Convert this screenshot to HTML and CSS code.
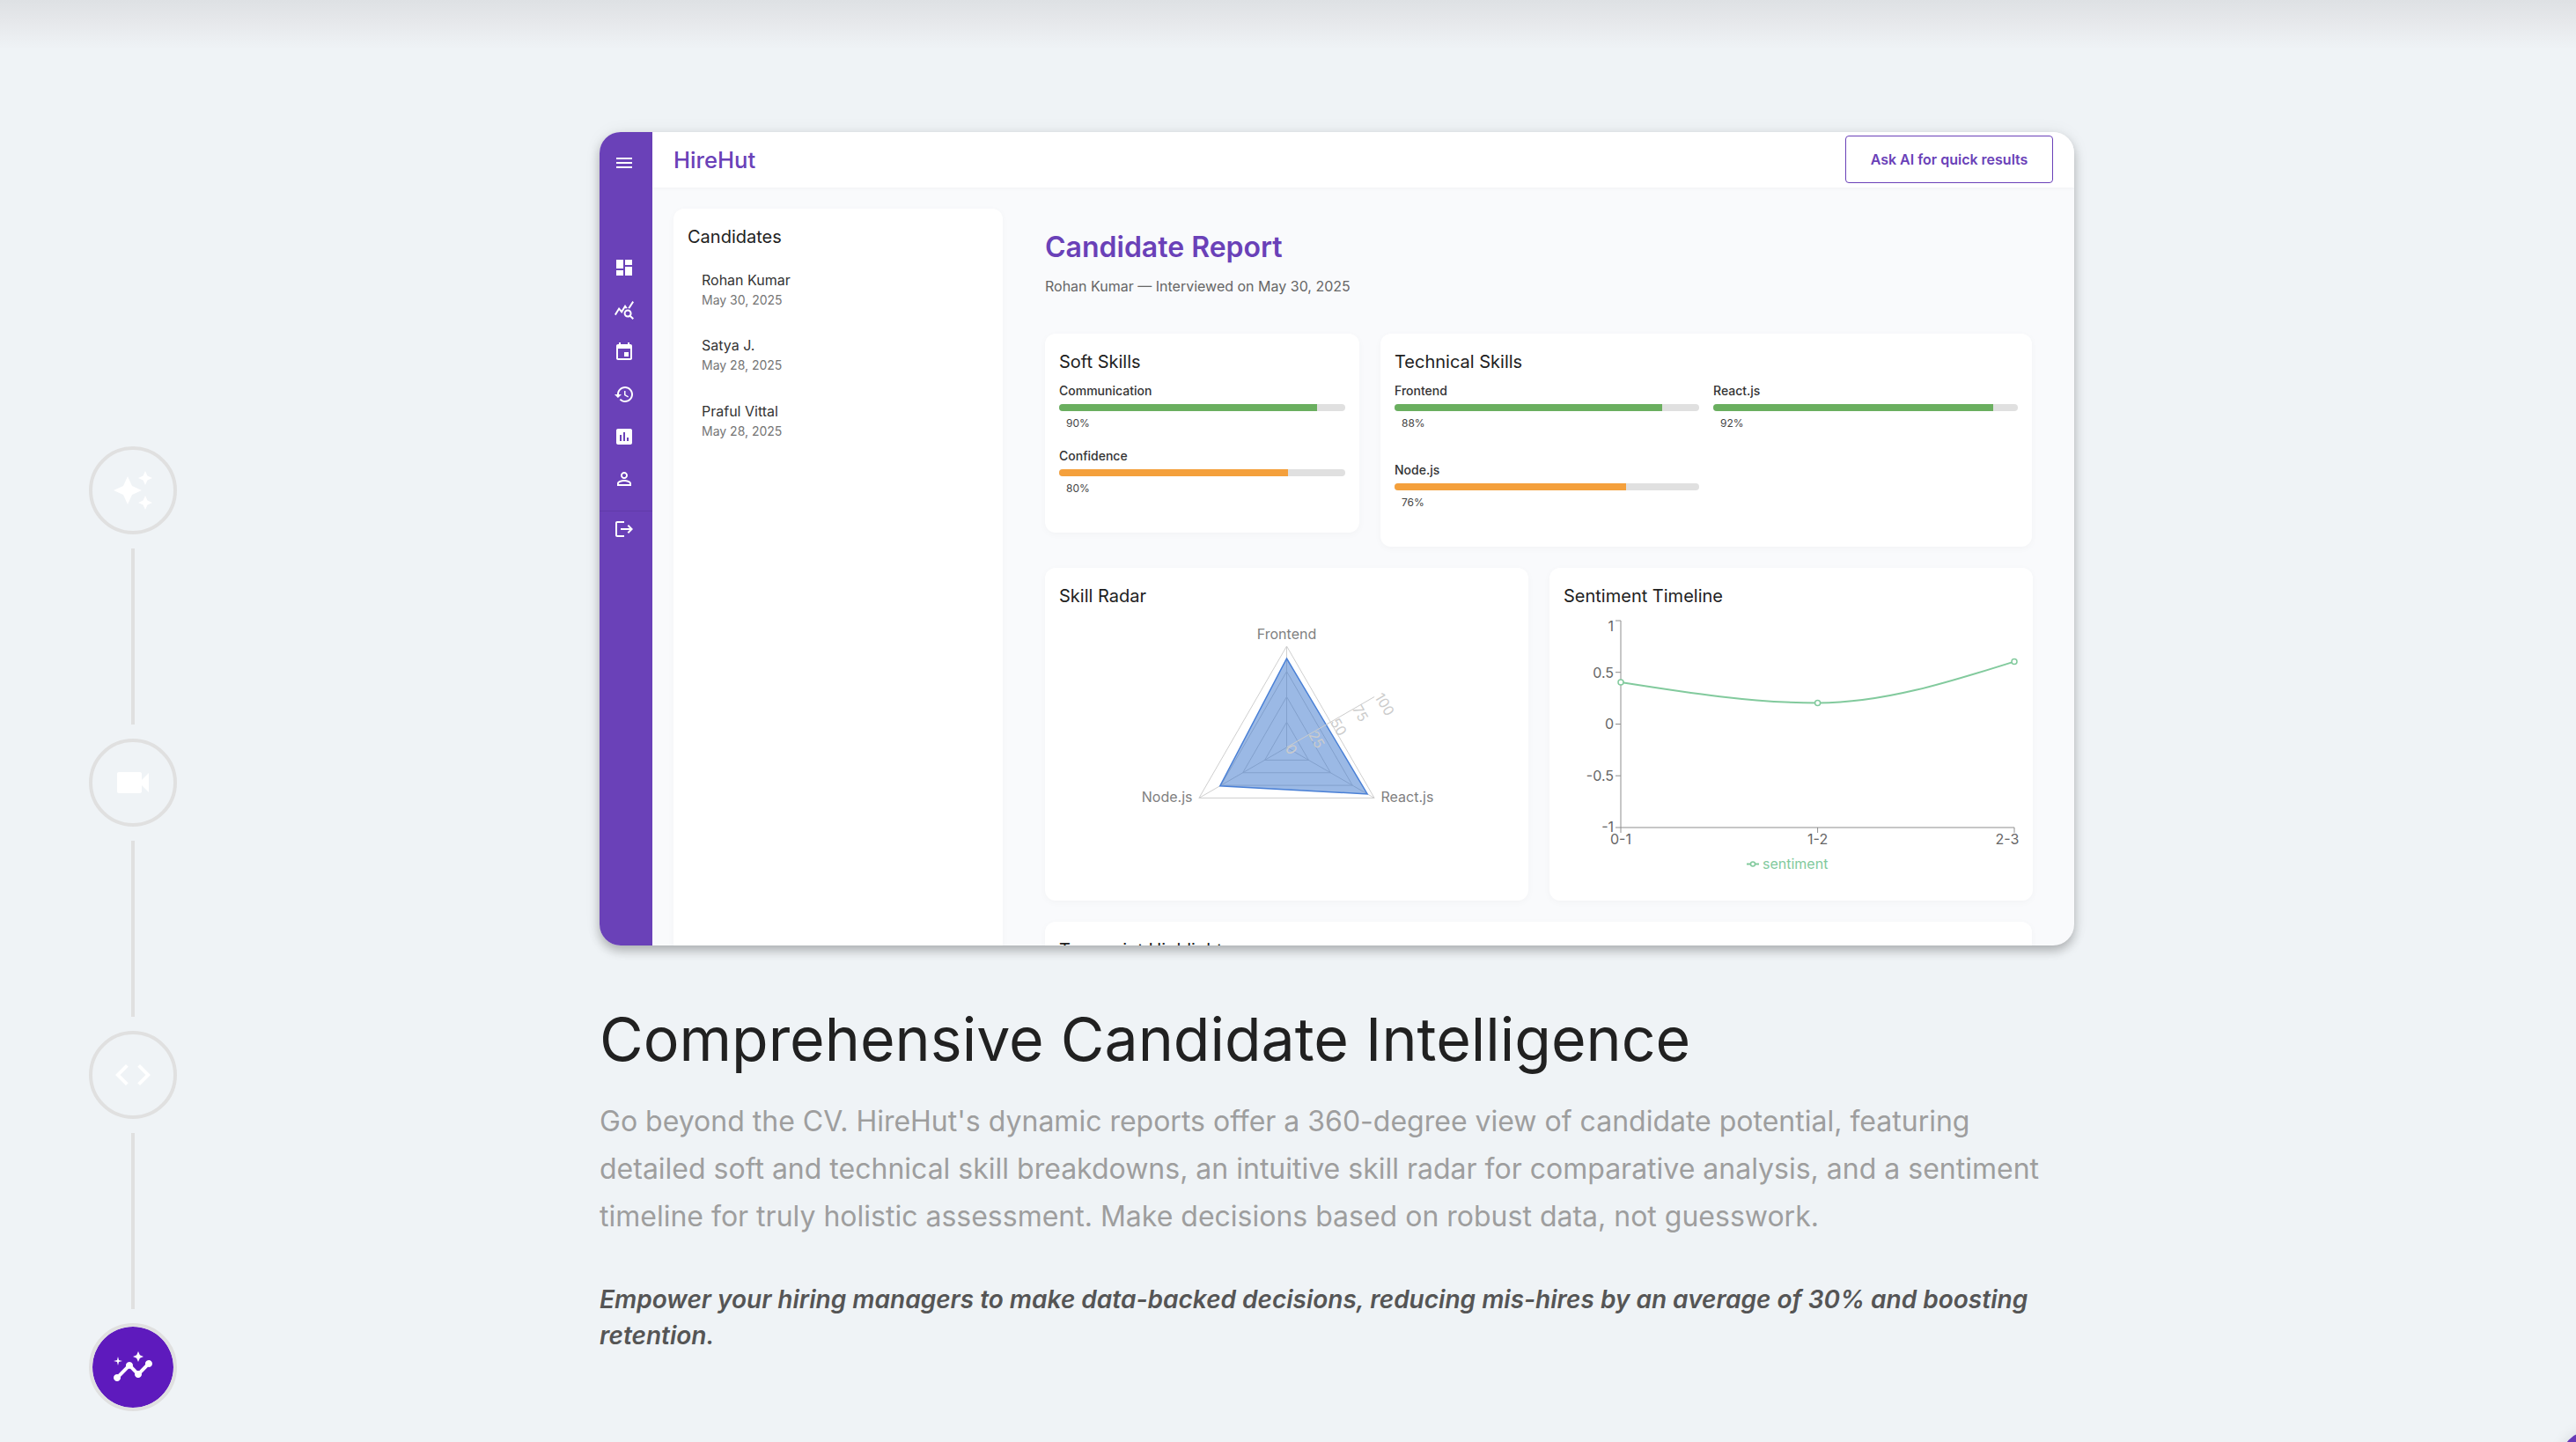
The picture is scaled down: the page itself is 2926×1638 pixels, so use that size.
FILE: index.html
```html
<!DOCTYPE html>
<html lang="en">
<head>
  <meta charset="UTF-8">
  <title>HireHut - Candidate Intelligence</title>
  <link rel="stylesheet" href="styles.css">
</head>
<body>
  <div class="page">
    <div class="stepper">
      <div class="step">
        <svg viewBox="0 0 24 24"><path d="M19 9l1.25-2.75L23 5l-2.75-1.25L19 1l-1.25 2.75L15 5l2.75 1.25zm0 6l-1.25 2.75L15 19l2.75 1.25L19 23l1.25-2.75L23 19l-2.75-1.25zm-7.5-5.5L9 4 6.5 9.5 1 12l5.5 2.5L9 20l2.5-5.5L17 12z"/></svg>
      </div>
      <div class="step-line"></div>
      <div class="step">
        <svg viewBox="0 0 24 24"><path d="M17 10.5V7c0-.55-.45-1-1-1H4c-.55 0-1 .45-1 1v10c0 .55.45 1 1 1h12c.55 0 1-.45 1-1v-3.5l4 4v-11l-4 4z"/></svg>
      </div>
      <div class="step-line"></div>
      <div class="step">
        <svg viewBox="0 0 24 24"><path d="M9.4 16.6L4.8 12l4.6-4.6L8 6l-6 6 6 6 1.4-1.4zm5.2 0l4.6-4.6-4.6-4.6L16 6l6 6-6 6-1.4-1.4z"/></svg>
      </div>
      <div class="step-line"></div>
      <div class="step step-active">
        <svg viewBox="0 0 24 24"><path d="M21 8c-1.45 0-2.26 1.44-1.93 2.51l-3.55 3.56c-.3-.09-.74-.09-1.04 0l-2.55-2.55C12.27 10.45 11.46 9 10 9c-1.45 0-2.27 1.44-1.93 2.52l-4.56 4.55C2.44 15.74 1 16.55 1 18c0 1.1.9 2 2 2 1.45 0 2.26-1.44 1.93-2.51l4.55-4.56c.3.09.74.09 1.04 0l2.55 2.55C12.73 16.55 13.54 18 15 18c1.45 0 2.27-1.44 1.93-2.52l3.56-3.55c1.07.33 2.51-.48 2.51-1.93 0-1.1-.9-2-2-2z"/><path d="M15 9l.94-2.07L18 6l-2.06-.93L15 3l-.92 2.07L12 6l2.08.93z"/><path d="M3.5 11L4 9l2-.5L4 8l-.5-2L3 8l-2 .5L3 9z"/></svg>
      </div>
    </div>

    <main class="content">
      <div class="app-frame">
        <aside class="sidebar">
          <svg class="nav-icon nav-menu" viewBox="0 0 24 24"><path d="M3 18h18v-2H3v2zm0-5h18v-2H3v2zm0-7v2h18V6H3z"/></svg>
          <nav class="nav-list">
            <svg class="nav-icon" viewBox="0 0 24 24"><path d="M3 13h8V3H3v10zm0 8h8v-6H3v6zm10 0h8V11h-8v10zm0-18v6h8V3h-8z"/></svg>
            <svg class="nav-icon" viewBox="0 0 24 24"><path d="M19.88 18.47c.44-.7.7-1.51.7-2.39 0-2.49-2.01-4.5-4.5-4.5s-4.5 2.01-4.5 4.5 2.01 4.5 4.49 4.5c.88 0 1.7-.26 2.39-.7L21.58 23 23 21.58l-3.12-3.11zm-3.8.11c-1.38 0-2.5-1.12-2.5-2.5s1.12-2.5 2.5-2.5 2.5 1.12 2.5 2.5-1.12 2.5-2.5 2.5zm-.36-8.5c-.74.02-1.45.18-2.1.45l-.55-.83-3.8 6.18-3.01-3.52-3.63 5.81L1 17l5-8 3 3.5L13 6l2.72 4.08zm2.59.5c-.64-.28-1.33-.45-2.05-.49L21.38 2 23 3.18l-4.69 7.4z"/></svg>
            <svg class="nav-icon" viewBox="0 0 24 24"><path d="M17 12h-5v5h5v-5zM16 1v2H8V1H6v2H5c-1.11 0-1.99.9-1.99 2L3 19c0 1.1.89 2 2 2h14c1.1 0 2-.9 2-2V5c0-1.1-.9-2-2-2h-1V1h-2zm3 18H5V8h14v11z"/></svg>
            <svg class="nav-icon" viewBox="0 0 24 24"><path d="M13 3c-4.97 0-9 4.03-9 9H1l3.89 3.89.07.14L9 12H6c0-3.87 3.13-7 7-7s7 3.13 7 7-3.13 7-7 7c-1.93 0-3.68-.79-4.94-2.06l-1.42 1.42C8.27 19.99 10.51 21 13 21c4.97 0 9-4.03 9-9s-4.03-9-9-9zm-1 5v5l4.28 2.54.72-1.21-3.5-2.08V8H12z"/></svg>
            <svg class="nav-icon" viewBox="0 0 24 24"><path d="M19 3H5c-1.1 0-2 .9-2 2v14c0 1.1.9 2 2 2h14c1.1 0 2-.9 2-2V5c0-1.1-.9-2-2-2zM9 17H7v-7h2v7zm4 0h-2V7h2v10zm4 0h-2v-4h2v4z"/></svg>
            <svg class="nav-icon" viewBox="0 0 24 24"><path d="M12 5.9c1.16 0 2.1.94 2.1 2.1s-.94 2.1-2.1 2.1S9.9 9.16 9.9 8s.94-2.1 2.1-2.1m0 9c2.97 0 6.1 1.46 6.1 2.1v1.1H5.9V17c0-.64 3.13-2.1 6.1-2.1M12 4C9.79 4 8 5.79 8 8s1.79 4 4 4 4-1.79 4-4-1.79-4-4-4zm0 9c-2.67 0-8 1.34-8 4v3h16v-3c0-2.66-5.33-4-8-4z"/></svg>
          </nav>
          <div class="nav-footer">
            <svg class="nav-icon" viewBox="0 0 24 24"><path d="M17 7l-1.41 1.41L18.17 11H8v2h10.17l-2.58 2.58L17 17l5-5zM4 5h8V3H4c-1.1 0-2 .9-2 2v14c0 1.1.9 2 2 2h8v-2H4V5z"/></svg>
          </div>
        </aside>

        <div class="app-main">
          <header class="topbar">
            <div class="brand">HireHut</div>
            <button class="ask-btn">Ask AI for quick results</button>
          </header>

          <div class="app-body">
            <section class="candidates">
              <h3 class="card-title">Candidates</h3>
              <div class="candidate"><div class="candidate-name">Rohan Kumar</div><div class="candidate-date">May 30, 2025</div></div>
              <div class="candidate"><div class="candidate-name">Satya J.</div><div class="candidate-date">May 28, 2025</div></div>
              <div class="candidate"><div class="candidate-name">Praful Vittal</div><div class="candidate-date">May 28, 2025</div></div>
            </section>

            <section class="report">
              <h2 class="report-title">Candidate Report</h2>
              <p class="report-sub">Rohan Kumar — Interviewed on May 30, 2025</p>

              <div class="skills-row">
                <div class="card">
                  <h3 class="card-title">Soft Skills</h3>
                  <div class="skill">
                    <div class="skill-label">Communication</div>
                    <div class="bar"><div class="bar-fill fill-green" style="width: 90%"></div></div>
                    <div class="skill-pct">90%</div>
                  </div>
                  <div class="skill">
                    <div class="skill-label">Confidence</div>
                    <div class="bar"><div class="bar-fill fill-orange" style="width: 80%"></div></div>
                    <div class="skill-pct">80%</div>
                  </div>
                </div>

                <div class="card">
                  <h3 class="card-title">Technical Skills</h3>
                  <div class="skill-grid">
                    <div class="skill">
                      <div class="skill-label">Frontend</div>
                      <div class="bar"><div class="bar-fill fill-green" style="width: 88%"></div></div>
                      <div class="skill-pct">88%</div>
                    </div>
                    <div class="skill">
                      <div class="skill-label">React.js</div>
                      <div class="bar"><div class="bar-fill fill-green" style="width: 92%"></div></div>
                      <div class="skill-pct">92%</div>
                    </div>
                    <div class="skill">
                      <div class="skill-label">Node.js</div>
                      <div class="bar"><div class="bar-fill fill-orange" style="width: 76%"></div></div>
                      <div class="skill-pct">76%</div>
                    </div>
                  </div>
                </div>
              </div>

              <div class="charts-row">
                <div class="card chart-card">
                  <h3 class="card-title">Skill Radar</h3>
                  <svg class="chart" viewBox="0 0 517 300">
                    <g class="radar-grid">
                      <polygon points="258.5,119.25 283.4,162.4 233.6,162.4"/>
                      <polygon points="258.5,90.5 308.3,176.75 208.7,176.75"/>
                      <polygon points="258.5,61.75 333.2,191.1 183.8,191.1"/>
                      <polygon points="258.5,33 358.1,205.5 158.9,205.5"/>
                      <line x1="258.5" y1="148" x2="258.5" y2="33"/>
                      <line x1="258.5" y1="148" x2="358.1" y2="205.5"/>
                      <line x1="258.5" y1="148" x2="158.9" y2="205.5"/>
                    </g>
                    <polygon class="radar-area" points="258.5,47 350.1,200.9 182.8,191.7"/>
                    <g class="radar-axis">
                      <line x1="258.5" y1="148" x2="358.1" y2="90.5"/>
                      <text x="264" y="150" transform="rotate(60 264 150)">0</text>
                      <text x="292.8" y="139" transform="rotate(60 292.8 139)">25</text>
                      <text x="317.7" y="124.7" transform="rotate(60 317.7 124.7)">50</text>
                      <text x="342.5" y="109" transform="rotate(60 342.5 109)">75</text>
                      <text x="370" y="99" transform="rotate(60 370 99)">100</text>
                    </g>
                    <text class="radar-label" x="258.5" y="24.5" text-anchor="middle">Frontend</text>
                    <text class="radar-label" x="365.5" y="210" text-anchor="start">React.js</text>
                    <text class="radar-label" x="151.5" y="210" text-anchor="end">Node.js</text>
                  </svg>
                </div>

                <div class="card chart-card">
                  <h3 class="card-title">Sentiment Timeline</h3>
                  <svg class="chart" viewBox="0 0 517 300">
                    <g class="line-axis">
                      <path d="M65 239V4"/>
                      <path d="M65 239H512V245M288.6 239V245M65 239V245"/>
                      <path d="M59 4H65M59 62.7H65M59 121.5H65M59 180.2H65M59 239H65"/>
                    </g>
                    <g class="line-ticks" text-anchor="end">
                      <text x="57" y="16">1</text>
                      <text x="57" y="68.5">0.5</text>
                      <text x="57" y="127">0</text>
                      <text x="57" y="186">-0.5</text>
                      <text x="57" y="244">-1</text>
                    </g>
                    <g class="line-ticks" text-anchor="middle">
                      <text x="65" y="258">0-1</text>
                      <text x="288.6" y="258">1-2</text>
                      <text x="504" y="258">2-3</text>
                    </g>
                    <path class="line-path" d="M65 74C139.5 85.7 214.1 97.5 288.6 97.5C363.1 97.5 437.5 74 512 50.5"/>
                    <circle class="line-dot" cx="65" cy="74" r="3"/>
                    <circle class="line-dot" cx="288.6" cy="97.5" r="3"/>
                    <circle class="line-dot" cx="512" cy="50.5" r="3"/>
                    <path class="line-path line-key" d="M208 280.5H222"/>
                    <circle class="line-dot line-key" cx="215" cy="280.5" r="2.5"/>
                    <text class="line-legend" x="226" y="286">sentiment</text>
                  </svg>
                </div>
              </div>

              <div class="card">
                <h3 class="card-title">Transcript Highlights</h3>
              </div>
            </section>
          </div>
        </div>
      </div>

      <h1 class="headline">Comprehensive Candidate Intelligence</h1>
      <p class="lead">Go beyond the CV. HireHut's dynamic reports offer a 360-degree view of candidate potential, featuring detailed soft and technical skill breakdowns, an intuitive skill radar for comparative analysis, and a sentiment timeline for truly holistic assessment. Make decisions based on robust data, not guesswork.</p>
      <p class="callout">Empower your hiring managers to make data-backed decisions, reducing mis-hires by an average of 30% and boosting retention.</p>
    </main>
  </div>
  <div class="corner-fab"></div>
</body>
</html>
```

FILE: styles.css
```css
/* Page */
* {
  margin: 0;
  padding: 0;
  box-sizing: border-box;
}

body {
  font-family: 'Inter', sans-serif;
  background: #eff3f6;
  color: #212121;
  height: 1638px;
  overflow: hidden;
}

.page {
  display: flex;
  align-items: flex-start;
  height: 100%;
  padding: 150px 0 0 101px;
  background: linear-gradient(to bottom, #dee1e4 0, #e6e8eb 25px, #eff3f6 56px);
}

.corner-fab {
  position: fixed;
  right: -60px;
  bottom: -66px;
  width: 80px;
  height: 80px;
  border-radius: 50%;
  background: #673ab7;
  box-shadow: 0 0 16px rgba(0, 0, 0, 0.1);
}

/* Left step rail */
.stepper {
  display: flex;
  flex-direction: column;
  align-items: center;
  gap: 16px;
  width: 100px;
  margin: 357px 480px 0 0;
}

.step {
  display: flex;
  justify-content: center;
  align-items: center;
  width: 100px;
  height: 100px;
  border: 4px solid #e0e0e0;
  border-radius: 50%;
  flex: none;
}

.step svg {
  width: 48px;
  height: 48px;
  fill: #fff;
}

.step-active {
  background: #5e1abd;
  background-clip: padding-box;
}

.step-line {
  width: 4px;
  height: 200px;
  background: #e0e0e0;
  flex: none;
}

/* App screenshot frame */
.content {
  width: 1675px;
}

.app-frame {
  display: flex;
  height: 924px;
  border-radius: 24px;
  overflow: hidden;
  background: #f9fafc;
  box-shadow: 0 6px 12px rgba(0, 0, 0, 0.25), 0 0 20px rgba(0, 0, 0, 0.06);
}

.sidebar {
  width: 60px;
  flex: none;
  padding: 23px 0 0 16px;
  background: #6a41b8;
}

.nav-icon {
  display: block;
  width: 24px;
  height: 24px;
  fill: #fff;
}

.nav-list {
  display: flex;
  flex-direction: column;
  gap: 24px;
  margin-top: 95px;
}

.nav-footer {
  margin: 24px 0 0 -16px;
  padding: 8px 0 0 16px;
  border-top: 1px solid rgba(0, 0, 0, 0.08);
}

.app-main {
  flex: 1;
  min-width: 0;
  display: flex;
  flex-direction: column;
}

.topbar {
  display: flex;
  justify-content: space-between;
  align-items: center;
  height: 63px;
  flex: none;
  padding: 0 24px;
  background: #fff;
  box-shadow: 0 1px 4px rgba(0, 0, 0, 0.04);
}

.brand {
  font-size: 25.6px;
  font-weight: 500;
  color: #6a41b8;
}

.ask-btn {
  width: 236px;
  height: 54px;
  margin-bottom: 1px;
  font-family: inherit;
  font-size: 16px;
  font-weight: 600;
  color: #6a41b8;
  background: #fff;
  border: 1.5px solid #6a41b8;
  border-radius: 4px;
}

.app-body {
  display: flex;
  align-items: flex-start;
  gap: 48px;
  padding: 24px 48px 0 24px;
}

.candidates {
  width: 374px;
  height: 900px;
  flex: none;
  padding: 16px;
  background: #fff;
  border-radius: 12px;
  box-shadow: 0 2px 8px rgba(0, 0, 0, 0.03);
}

.card-title {
  font-size: 20px;
  font-weight: 400;
  line-height: 32px;
  color: #212121;
}

.candidates .card-title {
  margin-bottom: 21px;
}

.candidate {
  padding-left: 16px;
  margin-bottom: 29.3px;
}

.candidate-name {
  font-size: 16px;
  line-height: 24px;
  color: #333;
}

.candidate-date {
  font-size: 14px;
  line-height: 20px;
  margin-top: 1px;
  color: #757575;
}

.report {
  flex: 1;
  min-width: 0;
  padding-top: 24px;
}

.report-title {
  font-size: 32px;
  font-weight: 600;
  line-height: 40px;
  color: #6a41b8;
}

.report-sub {
  font-size: 16px;
  line-height: 24px;
  margin: 12px 0 42px;
  color: #666;
}

.card {
  padding: 16px;
  background: #fff;
  border-radius: 12px;
  box-shadow: 0 2px 8px rgba(0, 0, 0, 0.03);
}

.skills-row {
  display: grid;
  grid-template-columns: 357px 1fr;
  gap: 24px;
  align-items: start;
}

.skills-row .card {
  padding-bottom: 40px;
}

.skills-row .card-title {
  margin-bottom: 7px;
}

.skill + .skill {
  margin-top: 17px;
}

.skill-grid {
  display: grid;
  grid-template-columns: 1fr 1fr;
  gap: 33px 16px;
}

.skill-grid .skill + .skill {
  margin-top: 0;
}

.skill-label {
  font-size: 14px;
  font-weight: 500;
  line-height: 20px;
  margin-bottom: 5px;
  color: #333;
}

.bar {
  height: 8px;
  background: #e0e0e0;
  border-radius: 4px;
  overflow: hidden;
}

.bar-fill {
  height: 100%;
}

.fill-green {
  background: #6aaf5f;
}

.fill-orange {
  background: #f4a03c;
}

.skill-pct {
  font-size: 12px;
  line-height: 20px;
  margin: 4px 0 0 8px;
  color: #444;
}

.charts-row {
  display: grid;
  grid-template-columns: 1fr 1fr;
  gap: 24px;
  margin: 24px 0;
}

.chart-card {
  height: 378px;
}

.chart-card .card-title {
  margin-bottom: 8px;
}

.chart {
  display: block;
  width: 517px;
  height: 300px;
  font-size: 16px;
}

/* Charts */
.radar-grid polygon,
.radar-grid line {
  fill: none;
  stroke: #cfcfcf;
  stroke-width: 1;
}

.radar-area {
  fill: #2e6cc8;
  fill-opacity: 0.48;
  stroke: #4a80d6;
  stroke-width: 1.5;
}

.radar-axis line {
  stroke: #ccc;
}

.radar-axis text {
  fill: #ccc;
  text-anchor: middle;
  dominant-baseline: central;
}

.radar-label {
  fill: #808080;
}

.line-axis path {
  fill: none;
  stroke: #8e8e8e;
  stroke-width: 1;
}

.line-ticks text {
  fill: #666;
}

.line-path {
  fill: none;
  stroke: #82ca9d;
  stroke-width: 2;
}

.line-dot {
  fill: #fff;
  stroke: #82ca9d;
  stroke-width: 1.5;
}

.line-legend {
  fill: #82ca9d;
}

/* Copy under the frame */
.headline {
  font-size: 68px;
  font-weight: 400;
  line-height: 80px;
  margin-top: 66px;
  color: #212121;
}

.lead {
  font-size: 32px;
  line-height: 54px;
  margin-top: 27px;
  color: #9e9e9e;
}

.callout {
  font-size: 28px;
  font-weight: 600;
  font-style: italic;
  line-height: 41px;
  margin-top: 47px;
  color: #555;
}
```
